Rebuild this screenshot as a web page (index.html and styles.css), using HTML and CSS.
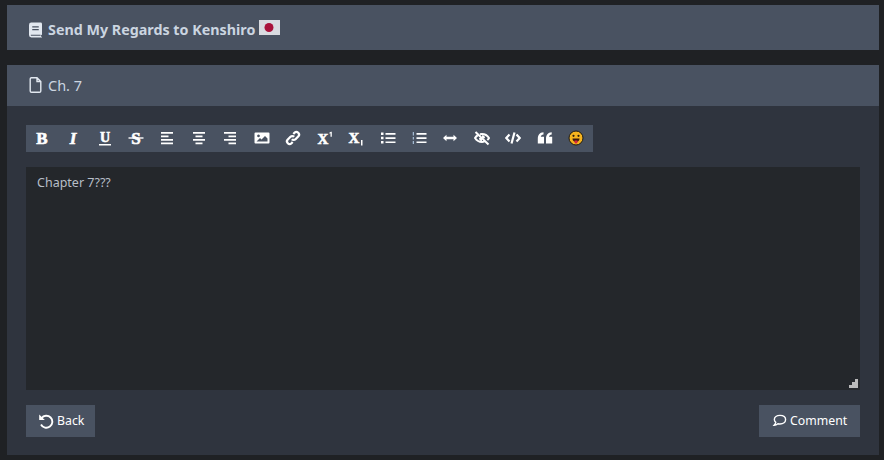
FILE: index.html
```html
<!DOCTYPE html>
<html lang="en">
<head>
<meta charset="utf-8">
<title>Ch. 7</title>
<link rel="stylesheet" href="styles.css">
</head>
<body>
<header class="title-bar">
  <svg class="head-icon" viewBox="0 0 14 16"><path fill="#e2e8f0" d="M2.5 0H12.5A1.5 1.5 0 0 1 14 1.500V13L13 13.500V15L14 15.500V16H2.500A2.500 2.500 0 0 1 0 13.500V2.500A2.500 2.500 0 0 1 2.500 0Z"/><path fill="#495261" d="M3.500 4H10.500V5.300H3.500ZM3.500 7H10.500V8.300H3.500ZM2 13H12.500V14.300H2Z"/></svg>
  <h1 class="title">Send My Regards to Kenshiro</h1>
  <svg class="flag" viewBox="0 0 21 15"><rect width="21" height="15" fill="#d9dbe0"/><circle cx="10" cy="7.500" r="4.500" fill="#a8123a"/></svg>
</header>
<main class="card">
  <div class="card-head">
    <svg class="head-icon" viewBox="0 0 12 16"><path fill="none" stroke="#e2e8f0" stroke-width="1.400" d="M1.700.7H7.500L11.300 4.500V14A1.300 1.300 0 0 1 10 15.300H2A1.300 1.300 0 0 1 .7 14V2A1.300 1.300 0 0 1 1.700.7ZM7.500.7V4.500H11.300"/></svg>
    <span class="chapter">Ch. 7</span>
  </div>
  <div class="card-body">
    <div class="toolbar">
      <span class="tool"><svg viewBox="0 0 16 16"><text class="glyph glyph-b" x="8" y="13.500">B</text></svg></span>
      <span class="tool"><svg viewBox="0 0 16 16"><text class="glyph glyph-i" x="8" y="13.500">I</text></svg></span>
      <span class="tool"><svg viewBox="0 0 16 16"><text class="glyph glyph-u" x="8" y="11.500">U</text><path class="ink" d="M2 14h12v1.500H2z"/></svg></span>
      <span class="tool"><svg viewBox="0 0 16 16"><text class="glyph glyph-s" x="8" y="13.500">S</text><path class="ink" d="M.5 7.300h15v1.400H.5z"/></svg></span>
      <span class="tool"><svg viewBox="0 0 16 16"><path class="ink" d="M2 2h12v1.800H2zM2 5.500h7.500v1.800H2zM2 9h12v1.800H2zM2 12.500h12v1.800H2z"/></svg></span>
      <span class="tool"><svg viewBox="0 0 16 16"><path class="ink" d="M2 2h12v1.800H2zM4.500 5.500h7v1.800h-7zM2 9h12v1.800H2zM4.500 12.500h7v1.800h-7z"/></svg></span>
      <span class="tool"><svg viewBox="0 0 16 16"><path class="ink" d="M2 2h12v1.800H2zM6.500 5.500H14v1.800H6.500zM2 9h12v1.800H2zM6.500 12.500H14v1.800H6.500z"/></svg></span>
      <span class="tool"><svg viewBox="0 0 16 16"><path class="ink" fill-rule="evenodd" d="M1.500 2.500h13a1 1 0 0 1 1 1v9a1 1 0 0 1-1 1h-13a1 1 0 0 1-1-1v-9a1 1 0 0 1 1-1ZM2.500 11.500h11V8.500L11 6 7.500 9.500 6 8ZM4.500 4.500a1.400 1.400 0 1 0 .01 0Z"/></svg></span>
      <span class="tool"><svg viewBox="0 0 16 16"><path class="line" stroke-width="2.300" d="M6.800 9.200a2.600 2.600 0 0 0 3.700 0l2.700-2.700a2.600 2.600 0 0 0-3.700-3.700L8.300 4M9.200 6.800a2.600 2.600 0 0 0-3.700 0L2.800 9.500a2.600 2.600 0 0 0 3.700 3.700L7.700 12"/></svg></span>
      <span class="tool"><svg viewBox="0 0 16 16"><text class="glyph glyph-x" x="6" y="14">X</text><path class="ink" d="M12.500 2.500l1.500-.8h.8v5h-1.300V3.200l-1 .5z"/></svg></span>
      <span class="tool"><svg viewBox="0 0 16 16"><text class="glyph glyph-x" x="6" y="12.500">X</text><path class="ink" d="M13 10h1.500v5.500H13z"/></svg></span>
      <span class="tool"><svg viewBox="0 0 16 16"><path class="ink" d="M1 2.500h2.500V5H1zM1 6.800h2.500v2.500H1zM1 11h2.500v2.500H1zM5.500 3h10v1.700h-10zM5.500 7.200h10v1.700h-10zM5.500 11.400h10v1.700h-10z"/></svg></span>
      <span class="tool"><svg viewBox="0 0 16 16"><path class="ink" d="M5.500 3h10v1.700h-10zM5.500 7.200h10v1.700h-10zM5.500 11.400h10v1.700h-10z"/><path class="ink-thin" d="M1.800 2h1v3.500h-1zM1.800 7h1v2.500h-1zM1.800 11h1v3h-1z"/></svg></span>
      <span class="tool"><svg viewBox="0 0 16 16"><path class="ink" d="M4.500 6.800h7V4.800l3.500 3.200-3.500 3.200V9.200h-7v2L1 8l3.500-3.200z"/></svg></span>
      <span class="tool"><svg viewBox="0 0 16 16"><path class="line" stroke-width="2" d="M1.500 2 14.500 14.500M3.500 5.400C2.500 6.200 1.500 7.300 1 8c1.500 2.300 4 4 7 4 .8 0 1.500-.1 2.200-.4M6 4.300C6.600 4.100 7.300 4 8 4c3 0 5.500 1.700 7 4-.4.700-1 1.400-1.700 2M8 6.200A2 2 0 0 1 10 8.200M6 8a2 2 0 0 0 2 2"/></svg></span>
      <span class="tool"><svg viewBox="0 0 16 16"><path class="line" stroke-width="2.200" d="M4.500 4.500 1.300 8l3.200 3.500M11.500 4.500 14.700 8l-3.200 3.500M9.500 2.500 6.500 13.500"/></svg></span>
      <span class="tool"><svg viewBox="0 0 16 16"><path class="ink" d="M.8 8.800C.8 5 2.500 2.500 6.500 2.200v2.300C4.800 4.800 4 5.500 3.800 6.800H7v6.700H.8zM9 8.800C9 5 10.700 2.500 14.700 2.200v2.300c-1.700.3-2.500 1-2.700 2.300h3.200v6.700H9z"/></svg></span>
      <span class="tool"><svg viewBox="0 0 16 16"><circle cx="8" cy="8" r="7" fill="#f6b41e" stroke="#1d1a14" stroke-width="1"/><circle cx="5.500" cy="5.800" r="1.100" fill="#2a1c0c"/><circle cx="10.500" cy="5.800" r="1.100" fill="#2a1c0c"/><path fill="#3a1a10" d="M4.500 8.500h7c0 2.300-1.500 3.500-3.500 3.500s-3.500-1.200-3.500-3.500Z"/><path fill="#d9263c" d="M6.500 10.500h3v1.500a1.500 1.500 0 0 1-3 0Z"/></svg></span>
    </div>
    <div class="editor">
      <p class="editor-text">Chapter 7???</p>
      <svg class="grip" viewBox="0 0 9 9"><path fill="#b9b9b9" d="M6 0h3v9H0V6h3V3h3z"/></svg>
    </div>
    <div class="actions">
      <a class="btn btn-back">
        <svg class="btn-icon btn-icon-back" viewBox="0 0 16 16"><path fill="none" stroke="#fff" stroke-width="1.900" d="M3.500 5.200A6 6 0 1 1 3 11.500"/><path fill="#fff" d="M1.200 1.500 6.800 7H1.200Z"/></svg>
        <span>Back</span>
      </a>
      <a class="btn btn-comment">
        <svg class="btn-icon" viewBox="0 0 16 16"><path fill="none" stroke="#fff" stroke-width="1.500" d="M8.500 2.500C5 2.500 2.500 4.500 2.500 7c0 1.200.6 2.200 1.500 3-.2 1-.8 2-1.700 3 1.500 0 3-.7 4-1.500.7.200 1.500.3 2.200.3 3.500 0 6-2 6-4.800s-2.500-4.500-6-4.500Z"/></svg>
        <span>Comment</span>
      </a>
    </div>
  </div>
</main>
</body>
</html>
```

FILE: styles.css
```css
* { box-sizing: border-box; }
html, body { margin: 0; height: 100%; }
body {
  background: #1f2124;
  padding: 5px 5px 5px 7px;
  font-family: "Noto Sans", "Open Sans", sans-serif;
  color: #e2e8f0;
  overflow: hidden;
}
.title-bar {
  display: flex;
  align-items: center;
  height: 45px;
  padding: 4px 0 0 22px;
  background: #495261;
  margin-bottom: 15px;
}
.head-icon { width: 13px; height: 16px; margin-right: 6px; flex: none; }
.title {
  margin: 0;
  font-size: 14.300px;
  font-weight: 700;
  line-height: 20px;
  color: #cbd5e0;
  white-space: nowrap;
}
.flag { width: 21px; height: 15px; margin: 0 0 4px 4px; }
.card { background: #2f343e; height: 390px; }
.card-head {
  display: flex;
  align-items: center;
  height: 41px;
  padding: 0 0 2px 22px;
  background: #495261;
}
.chapter { font-size: 14.500px; color: #cbd5e0; }
.card-body { padding: 19px 19px 0; }
.toolbar {
  display: flex;
  width: 567px;
  height: 27px;
  background: #495261;
  padding: 0 1px 2px 0;
}
.tool {
  flex: 1;
  display: flex;
  align-items: center;
  justify-content: center;
}
.tool svg { width: 16px; height: 16px; }
.ink { fill: #fff; }
.ink-thin { fill: #b9d4ee; }
.line { fill: none; stroke: #fff; }
.glyph {
  fill: #fff;
  stroke: #fff;
  stroke-width: .6px;
  text-anchor: middle;
  font-family: "Liberation Serif", serif;
  font-weight: 700;
}
.glyph-b { font-size: 17px; }
.glyph-i { font-size: 17px; font-style: italic; }
.glyph-u { font-size: 14px; }
.glyph-s { font-size: 17px; }
.glyph-x { font-size: 15px; }
.editor {
  position: relative;
  height: 223px;
  margin-top: 15px;
  background: #24272b;
  padding: 7px 11px;
}
.editor-text {
  margin: 0;
  font-size: 12.500px;
  line-height: 18px;
  color: #b7bec8;
}
.grip {
  position: absolute;
  right: 2px;
  bottom: 2px;
  width: 9px;
  height: 9px;
}
.actions {
  display: flex;
  justify-content: space-between;
  margin-top: 15px;
}
.btn {
  display: flex;
  align-items: center;
  height: 32px;
  padding-bottom: 1px;
  background: #495261;
  color: #fff;
  font-size: 12.300px;
}
.btn-back { width: 69px; padding-left: 12px; }
.btn-comment { width: 101px; padding-left: 13px; }
.btn-icon { width: 15px; height: 15px; margin-right: 3px; flex: none; }
.btn-icon-back { width: 16px; height: 16px; margin-right: 3px; }
```
